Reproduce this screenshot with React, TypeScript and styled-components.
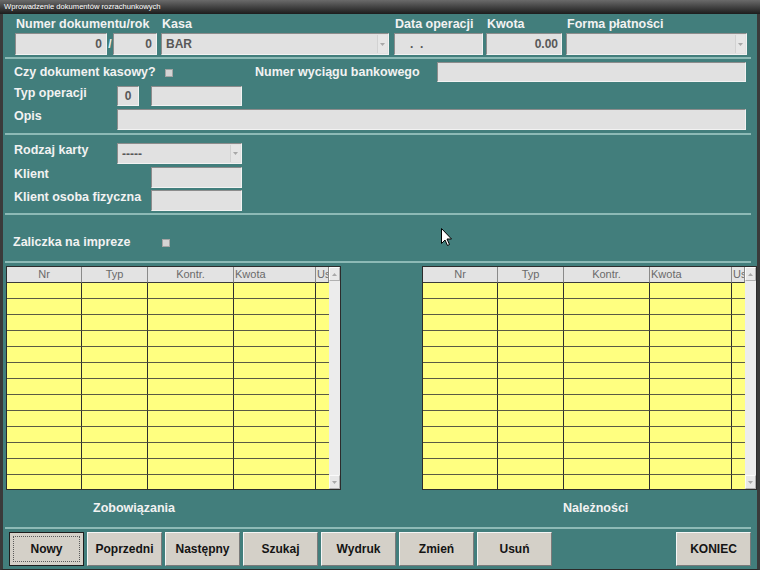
import React from "react";
import styled, { createGlobalStyle, css } from "styled-components";

const GlobalStyle = createGlobalStyle`
  html, body {
    margin: 0;
    padding: 0;
    background: #427e7c;
  }
  body {
    font-family: "Liberation Sans", Arial, sans-serif;
  }
`;

const Window = styled.div`
  position: relative;
  width: 760px;
  height: 570px;
  display: flex;
  flex-direction: column;
  overflow: hidden;
`;

const TitleBar = styled.div`
  height: 14px;
  flex: none;
  background: linear-gradient(#6a6a6a, #1c1c1c);
  color: #fff;
  font-size: 7.6px;
  line-height: 14px;
  padding-left: 4px;
  white-space: nowrap;
`;

const Body = styled.div`
  flex: 1;
  background: #427e7c;
  border-left: 3px solid #3a3a3a;
  border-right: 3px solid #3a3a3a;
  border-bottom: 1px solid #2a2a2a;
  display: flex;
  flex-direction: column;
  overflow: hidden;
`;

const TopGrid = styled.div`
  margin: 2px 0 0 12px;
  display: grid;
  grid-template-columns: 92px 6px 44px 4px 228px 5px 89px 3px 76px 4px 181px;
  grid-template-rows: 14px 22px;
  row-gap: 3px;
`;

const HeadLabel = styled.span<{ $col: string }>`
  grid-row: 1;
  grid-column: ${(p) => p.$col};
  font-size: 12.5px;
  font-weight: bold;
  color: #f2f2f2;
  line-height: 16px;
  padding-left: 1px;
  white-space: nowrap;
`;

const Slash = styled.span`
  grid-row: 2;
  grid-column: 2;
  color: #f2f2f2;
  font-size: 12px;
  font-weight: bold;
  line-height: 22px;
  text-align: center;
`;

const Field = styled.div<{ $w?: number; $align?: string; $pad?: number; $col?: string }>`
  box-sizing: border-box;
  ${(p) => (p.$w ? `width: ${p.$w}px;` : "")}
  ${(p) => (p.$col ? `grid-row: 2; grid-column: ${p.$col};` : "")}
  height: 100%;
  flex: none;
  background: #e1e1e1;
  border: 1px solid;
  border-color: #8c8c8c #f2f2f2 #f2f2f2 #8c8c8c;
  color: #585858;
  font-size: 12px;
  font-weight: bold;
  display: flex;
  align-items: center;
  justify-content: ${(p) => p.$align || "flex-start"};
  padding: 0 ${(p) => p.$pad ?? 4}px;
  white-space: nowrap;
  overflow: hidden;
`;

const ComboText = styled.span`
  flex: 1;
`;

const ComboBtn = styled.div`
  width: 9px;
  align-self: stretch;
  margin: 1px -3px 1px 0;
  background: #e6e6e6;
  border-left: 1px solid #d2d2d2;
  display: flex;
  align-items: center;
  justify-content: center;
`;

const Row = styled.div<{ $mt: number; $h: number; $pl?: number }>`
  margin-top: ${(p) => p.$mt}px;
  height: ${(p) => p.$h}px;
  padding-left: ${(p) => p.$pl ?? 11}px;
  display: flex;
  align-items: center;
  flex: none;
`;

const FormLabel = styled.span<{ $w: number; $lh?: number }>`
  width: ${(p) => p.$w}px;
  flex: none;
  font-size: 12.5px;
  font-weight: bold;
  color: #f2f2f2;
  white-space: nowrap;
  align-self: flex-start;
  line-height: ${(p) => p.$lh ?? 14}px;
`;

const Gap = styled.div<{ $w: number }>`
  width: ${(p) => p.$w}px;
  flex: none;
`;

const Check = styled.div`
  width: 8px;
  height: 8px;
  box-sizing: border-box;
  background: #d4d4d4;
  border: 1px solid #a4a4a4;
  flex: none;
  margin-top: 1px;
`;

const Separator = styled.div<{ $mt: number }>`
  margin: ${(p) => p.$mt}px 0 0 2px;
  width: 746px;
  height: 2px;
  flex: none;
  background: #8dbab6;
`;

const TablesRow = styled.div`
  margin-top: 3px;
  padding-left: 3px;
  height: 224px;
  display: flex;
  gap: 81px;
  flex: none;
`;

const Table = styled.div`
  width: 335px;
  height: 224px;
  box-sizing: border-box;
  border: 1px solid #2c2c2c;
  display: flex;
  overflow: hidden;
  background: #ffff80;
`;

const GridArea = styled.div`
  display: grid;
  grid-template-columns: 75px 66px 86px 82px 13px;
  grid-auto-rows: 16px;
  align-content: start;
`;

const HeadCell = styled.div<{ $left?: boolean }>`
  box-sizing: border-box;
  background: #e3e3e3;
  border-right: 1px solid #8a8a8a;
  border-bottom: 1px solid #3a3a3a;
  color: #6a6a6a;
  font-size: 11px;
  line-height: 15px;
  text-align: ${(p) => (p.$left ? "left" : "center")};
  padding-left: ${(p) => (p.$left ? 1 : 0)}px;
  overflow: hidden;
  white-space: nowrap;
`;

const Cell = styled.div<{ $last?: boolean }>`
  box-sizing: border-box;
  background: #ffff80;
  border-right: ${(p) => (p.$last ? "none" : "1px solid #2e2e2e")};
  border-bottom: 1px solid #5a5a44;
`;

const Scroll = styled.div`
  width: 11px;
  flex: none;
  background: #ececec;
  display: flex;
  flex-direction: column;
  justify-content: space-between;
`;

const ScrollBtn = styled.div`
  height: 14px;
  box-sizing: border-box;
  background: #e8e8e8;
  border: 1px solid;
  border-color: #fafafa #b0b0b0 #b0b0b0 #fafafa;
  display: flex;
  align-items: center;
  justify-content: center;
`;

const Captions = styled.div`
  margin-top: 8px;
  height: 20px;
  padding-left: 90px;
  display: flex;
  align-items: center;
  flex: none;
`;

const Caption = styled.span<{ $w?: number }>`
  ${(p) => (p.$w ? `width: ${p.$w}px;` : "")}
  flex: none;
  font-size: 12.5px;
  font-weight: bold;
  color: #f2f2f2;
`;

const ButtonBar = styled.div`
  margin-top: 3px;
  height: 34px;
  padding: 0 6px;
  display: flex;
  gap: 3px;
  flex: none;
`;

const Button = styled.button<{ $focused?: boolean; $end?: boolean }>`
  position: relative;
  width: 75px;
  height: 34px;
  flex: none;
  box-sizing: border-box;
  background: #d4d0c8;
  border: 1px solid;
  border-color: #f6f6f6 #7a7a7a #7a7a7a #f6f6f6;
  font-family: "Liberation Sans", Arial, sans-serif;
  font-size: 12px;
  font-weight: bold;
  color: #141414;
  padding: 0;
  ${(p) => (p.$end ? "margin-left: auto;" : "")}
  ${(p) =>
    p.$focused &&
    css`
      border: 1px solid #1e1e1e;
      &::after {
        content: "";
        position: absolute;
        inset: 3px;
        border: 1px dotted #5a5a5a;
      }
    `}
`;

const Cursor = styled.svg`
  position: absolute;
  left: 441px;
  top: 228px;
`;

const Arrow = ({ up }: { up?: boolean }) => (
  <svg width="5" height="3" viewBox="0 0 5 3">
    <path d={up ? "M0 3 L2.5 0 L5 3 Z" : "M0 0 L5 0 L2.5 3 Z"} fill="#a8a8a8" />
  </svg>
);

const Combo = ({ w, text, col }: { w?: number; text: string; col?: string }) => (
  <Field $w={w} $col={col}>
    <ComboText>{text}</ComboText>
    <ComboBtn>
      <Arrow />
    </ComboBtn>
  </Field>
);

const columns = [
  { name: "Nr" },
  { name: "Typ" },
  { name: "Kontr." },
  { name: "Kwota", left: true },
  { name: "Us", left: true },
];

const DataTable = () => (
  <Table>
    <GridArea>
      {columns.map((c) => (
        <HeadCell key={c.name} $left={c.left}>
          {c.name}
        </HeadCell>
      ))}
      {Array.from({ length: 13 }).map((_, r) =>
        columns.map((c, i) => <Cell key={`${r}-${c.name}`} $last={i === 4} />)
      )}
    </GridArea>
    <Scroll>
      <ScrollBtn>
        <Arrow up />
      </ScrollBtn>
      <ScrollBtn>
        <Arrow />
      </ScrollBtn>
    </Scroll>
  </Table>
);

const buttons = ["Nowy", "Poprzedni", "Następny", "Szukaj", "Wydruk", "Zmień", "Usuń"];

export default function App() {
  return (
    <Window>
      <GlobalStyle />
      <TitleBar>Wprowadzenie dokumentów rozrachunkowych</TitleBar>
      <Body>
        <TopGrid>
          <HeadLabel $col="1 / span 4">Numer dokumentu/rok</HeadLabel>
          <HeadLabel $col="5 / span 1">Kasa</HeadLabel>
          <HeadLabel $col="7 / span 1">Data operacji</HeadLabel>
          <HeadLabel $col="9 / span 1">Kwota</HeadLabel>
          <HeadLabel $col="11 / span 1">Forma płatności</HeadLabel>
          <Field $col="1" $align="flex-end">0</Field>
          <Slash>/</Slash>
          <Field $col="3" $align="flex-end">0</Field>
          <Combo col="5" text="BAR" />
          <Field $col="7" $pad={15}>.&nbsp;&nbsp;.</Field>
          <Field $col="9" $align="flex-end" $pad={3}>0.00</Field>
          <Combo col="11" text="" />
        </TopGrid>
        <Separator $mt={2} />

        <Row $mt={3} $h={20}>
          <FormLabel $w={151} $lh={20}>Czy dokument kasowy?</FormLabel>
          <Check />
          <Gap $w={82} />
          <FormLabel $w={182} $lh={20}>Numer wyciągu bankowego</FormLabel>
          <Field $w={309} />
        </Row>
        <Row $mt={4} $h={20}>
          <FormLabel $w={103}>Typ operacji</FormLabel>
          <Field $w={22} $align="center">
            0
          </Field>
          <Gap $w={12} />
          <Field $w={91} />
        </Row>
        <Row $mt={3} $h={21}>
          <FormLabel $w={103}>Opis</FormLabel>
          <Field $w={629} />
        </Row>
        <Separator $mt={3} />

        <Row $mt={8} $h={21}>
          <FormLabel $w={103}>Rodzaj karty</FormLabel>
          <Combo w={125} text="-----" />
        </Row>
        <Row $mt={3} $h={21}>
          <FormLabel $w={137}>Klient</FormLabel>
          <Field $w={91} />
        </Row>
        <Row $mt={2} $h={21}>
          <FormLabel $w={137}>Klient osoba fizyczna</FormLabel>
          <Field $w={91} />
        </Row>
        <Separator $mt={2} />

        <Row $mt={17} $h={20} $pl={10}>
          <FormLabel $w={149} $lh={20}>Zaliczka na impreze</FormLabel>
          <Check />
        </Row>
        <Separator $mt={9} />

        <TablesRow>
          <DataTable />
          <DataTable />
        </TablesRow>

        <Captions>
          <Caption $w={470}>Zobowiązania</Caption>
          <Caption>Należności</Caption>
        </Captions>
        <Separator $mt={9} />

        <ButtonBar>
          {buttons.map((b, i) => (
            <Button key={b} $focused={i === 0}>
              {b}
            </Button>
          ))}
          <Button $end>KONIEC</Button>
        </ButtonBar>
      </Body>
      <Cursor width="12" height="19" viewBox="0 0 12 19">
        <path d="M0.5 0.5 L0.5 15.5 L4 12 L6.5 17.5 L8.5 16.5 L6 11 L10.5 11 Z" fill="#fff" stroke="#000" strokeWidth="1" />
      </Cursor>
    </Window>
  );
}
